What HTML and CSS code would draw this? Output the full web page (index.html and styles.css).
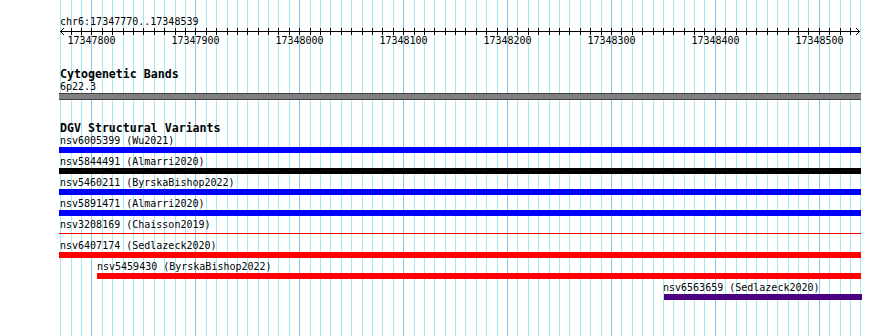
FILE: index.html
```html
<!DOCTYPE html>
<html lang="en">
<head>
    <meta charset="UTF-8">
    <title>chr6:17347770..17348539</title>
    <link rel="stylesheet" href="styles.css">
</head>
<body>
    <div class="browser">
        <svg class="grid" id="grid" width="890" height="336"></svg>
        <svg class="ruler" id="ruler" width="890" height="48">
            <text x="60" y="25">chr6:17347770..17348539</text>
            <line class="axis" x1="60" y1="31.5" x2="860" y2="31.5"/>
            <path class="arrow" d="M64 28 L60.5 31.5 L64 35"/>
            <path class="arrow" d="M856 28 L859.5 31.5 L856 35"/>
            <g id="ticks"></g>
            <text class="tick-label" x="91.5" y="44">17347800</text>
            <text class="tick-label" x="195.5" y="44">17347900</text>
            <text class="tick-label" x="299.5" y="44">17348000</text>
            <text class="tick-label" x="403.5" y="44">17348100</text>
            <text class="tick-label" x="507.5" y="44">17348200</text>
            <text class="tick-label" x="611.5" y="44">17348300</text>
            <text class="tick-label" x="715.5" y="44">17348400</text>
            <text class="tick-label" x="819.5" y="44">17348500</text>
        </svg>

        <div class="track track-cyto">
            <div class="track-title">Cytogenetic Bands</div>
            <div class="feature-label">6p22.3</div>
            <div class="band"></div>
        </div>

        <div class="track track-dgv">
            <div class="track-title">DGV Structural Variants</div>
            <div class="feature">
                <div class="feature-label">nsv6005399 (Wu2021)</div>
                <div class="bar blue"></div>
            </div>
            <div class="feature">
                <div class="feature-label">nsv5844491 (Almarri2020)</div>
                <div class="bar black"></div>
            </div>
            <div class="feature">
                <div class="feature-label">nsv5460211 (ByrskaBishop2022)</div>
                <div class="bar blue"></div>
            </div>
            <div class="feature">
                <div class="feature-label">nsv5891471 (Almarri2020)</div>
                <div class="bar blue"></div>
            </div>
            <div class="feature">
                <div class="feature-label">nsv3208169 (Chaisson2019)</div>
                <div class="bar thin red"></div>
            </div>
            <div class="feature">
                <div class="feature-label">nsv6407174 (Sedlazeck2020)</div>
                <div class="bar red"></div>
            </div>
            <div class="feature">
                <div class="feature-label" style="padding-left: 97px">nsv5459430 (ByrskaBishop2022)</div>
                <div class="bar red" style="margin-left: 97px; width: 764px"></div>
            </div>
            <div class="feature">
                <div class="feature-label" style="padding-left: 663px">nsv6563659 (Sedlazeck2020)</div>
                <div class="bar purple" style="margin-left: 664px; width: 198px"></div>
            </div>
        </div>
    </div>
    <script>
        const start = 17347770;
        const end = 17348540;
        const scale = 800 / 770;
        const ns = "http://www.w3.org/2000/svg";
        const grid = document.getElementById("grid");
        const ticks = document.getElementById("ticks");

        for (let bp = start; bp <= end; bp += 10) {
            const x = Math.round(60.3 + (bp - start) * scale) + 0.5;

            const line = document.createElementNS(ns, "line");
            line.setAttribute("x1", x);
            line.setAttribute("x2", x);
            line.setAttribute("y1", 0);
            line.setAttribute("y2", 336);
            line.setAttribute("class", bp % 100 === 0 ? "major" : "minor");
            grid.appendChild(line);

            if (bp > start && bp < end) {
                const tick = document.createElementNS(ns, "line");
                tick.setAttribute("x1", x);
                tick.setAttribute("x2", x);
                tick.setAttribute("y1", 28);
                tick.setAttribute("y2", 35);
                tick.setAttribute("class", "tick");
                ticks.appendChild(tick);
            }
        }
    </script>
</body>
</html>
```

FILE: styles.css
```css
body {
    margin: 0;
    font-family: "DejaVu Sans Mono", monospace;
    font-size: 10px;
    color: black;
    background-color: white;
}
.browser {
    position: relative;
    z-index: 0;
    width: 890px;
    height: 336px;
    overflow: hidden;
}
.grid {
    position: absolute;
    top: 0;
    left: 0;
    z-index: -1;
    shape-rendering: crispEdges;
}
.grid .minor {
    stroke: #a8e8f0;
    stroke-width: 1;
}
.grid .major {
    stroke: #8cc4e8;
    stroke-width: 1;
}
.ruler {
    display: block;
    font-family: "DejaVu Sans Mono", monospace;
    font-size: 10px;
}
.ruler text {
    fill: black;
}
.ruler .tick-label {
    text-anchor: middle;
}
.ruler .axis,
.ruler .tick {
    stroke: black;
    stroke-width: 1;
    shape-rendering: crispEdges;
}
.ruler .arrow {
    fill: none;
    stroke: black;
    stroke-width: 1;
}
.track-title {
    padding-left: 60px;
    font-size: 11.6px;
    font-weight: bold;
    line-height: 12px;
}
.track-cyto {
    margin-top: 20px;
}
.track-dgv {
    margin-top: 22px;
}
.feature-label {
    padding-left: 60px;
    padding-top: 1px;
    line-height: 11px;
    white-space: nowrap;
}
.band {
    margin: 1px 0 0 59px;
    width: 802px;
    height: 7px;
    box-sizing: border-box;
    background-color: #808080;
    border-top: 1px solid #404040;
    border-bottom: 1px solid #404040;
}
.feature {
    height: 21px;
}
.feature .feature-label {
    line-height: 12px;
}
.bar {
    margin: 0 0 0 59px;
    width: 802px;
    height: 6px;
}
.bar.thin {
    height: 1px;
    margin-top: 2px;
}
.blue {
    background-color: #0000ff;
}
.black {
    background-color: #000000;
}
.red {
    background-color: #ff0000;
}
.purple {
    background-color: #4b0082;
}
```
